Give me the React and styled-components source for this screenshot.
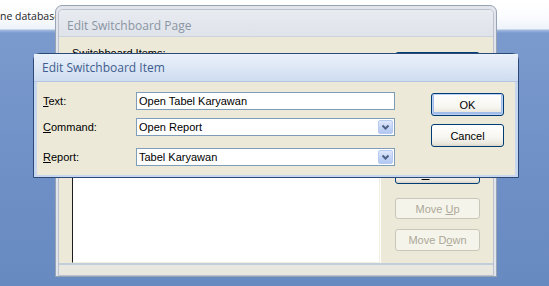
import React from 'react';
import styled, {createGlobalStyle} from 'styled-components';

const Global = createGlobalStyle`
  html, body { margin: 0; padding: 0; overflow: hidden; }
`

// - - DESKTOP - - //

const Desktop = styled.div`
  position: relative;
  width: 549px;
  height: 286px;
  overflow: hidden;
  display: flex;
  flex-direction: column;
  font-family: "Liberation Sans", Arial, sans-serif;
`

const TopStrip = styled.div`
  height: 30px;
  box-sizing: border-box;
  background: linear-gradient(#ffffff 0%, #fbfcfe 55%, #eef3fa 100%);
  border-bottom: 1px solid #c9d7ec;
  font-family: "Open Sans", sans-serif;
  font-size: 10.5px;
  color: #1e1e1e;
  padding: 9px 0 0 0;
  white-space: nowrap;
`

const Workspace = styled.div`
  flex: 1;
  background: linear-gradient(#a4bbdf 0px, #7b9ace 3px, #6d8fc5 60%, #678ac1 100%);
`

// - - WINDOWS - - //

const Window = styled.div`
  position: absolute;
  left: ${p => p.$x}px;
  top: ${p => p.$y}px;
  width: ${p => p.$w}px;
  height: ${p => p.$h}px;
  box-sizing: border-box;
  display: flex;
  flex-direction: column;
  border: 1px solid ${p => p.$active ? '#2b4a78' : '#98a3b2'};
  border-radius: 7px 7px 0 0;
  background: ${p => p.$active ? '#c7d7ef' : '#e2e6ec'};
  padding: ${p => p.$active ? '0' : '3px 2px 0'};
`

const Frame = styled.div`
  flex: 1;
  display: flex;
  flex-direction: column;
  border: 1px solid #b9c2ce;
  border-radius: 5px 5px 0 0;
  overflow: hidden;
`

const TitleBar = styled.div`
  height: ${p => p.$h}px;
  box-sizing: border-box;
  display: flex;
  align-items: center;
  padding: ${p => p.$pt || 0}px 0 0 ${p => p.$pl}px;
  font-family: "Open Sans", sans-serif;
  font-size: 12px;
  color: ${p => p.$active ? '#3e5d8e' : '#8a95a3'};
  background: ${p => p.$active
    ? 'linear-gradient(#eaf1fb 0%, #dde7f5 50%, #cfdcf0 100%)'
    : 'linear-gradient(#e8ebf0 0%, #dfe3ea 100%)'};
  border-bottom: 1px solid ${p => p.$active ? '#b3c6e4' : '#cdd3dc'};
`

const Body = styled.div`
  flex: 1;
  background: #ece9d8;
  margin: ${p => p.$m};
  display: flex;
  box-sizing: border-box;
  padding: ${p => p.$pad};
`

const BottomBand = styled.div`
  height: ${p => p.$h}px;
  border-top: 2px solid #c3cedc;
  background: #e9e8e0;
`

// - - CONTROLS - - //

const Column = styled.div`
  display: flex;
  flex-direction: column;
  width: ${p => p.$w ? p.$w + 'px' : 'auto'};
  margin-top: ${p => p.$mt || 0}px;
  margin-left: ${p => p.$ml || 0}px;
`

const Row = styled.div`
  display: flex;
  align-items: center;
  height: 18px;
  margin-top: ${p => p.$mt || 0}px;
`

const Label = styled.div`
  width: ${p => p.$w}px;
  font-size: 11px;
  color: #000;
`

const SmallLabel = styled.div`
  font-size: 11px;
  color: #000;
  height: 14px;
`

const Field = styled.div`
  position: relative;
  width: 259px;
  height: 18px;
  box-sizing: border-box;
  border: 1px solid #7f9db9;
  background: #fff;
  font-size: 11px;
  color: #000;
  padding-left: 2px;
  display: flex;
  align-items: center;
`

const DropButton = styled.div`
  position: absolute;
  right: 1px;
  top: 1px;
  width: 15px;
  height: 14px;
  box-sizing: border-box;
  border: 1px solid #b7cbf2;
  border-radius: 2px;
  background: linear-gradient(#dfe8fc 0%, #c6d6f7 50%, #b3c7f2 100%);
  display: flex;
  align-items: center;
  justify-content: center;
`

const Button = styled.div`
  width: ${p => p.$w}px;
  height: ${p => p.$h || 23}px;
  margin-top: ${p => p.$mt || 0}px;
  box-sizing: border-box;
  border: 1px solid ${p => p.$disabled ? '#c9c7ba' : '#003c74'};
  border-radius: 3px;
  background: ${p => p.$disabled
    ? '#f5f4ea'
    : 'linear-gradient(#ffffff 0%, #f7f6f1 60%, #e9e6dc 90%, #d7d2c6 100%)'};
  box-shadow: ${p => p.$default ? 'inset 0 0 0 1px #bcd0f3, inset 0 -1px 0 2px #a3bdea' : 'none'};
  display: flex;
  align-items: center;
  justify-content: center;
  font-size: 11px;
  color: ${p => p.$disabled ? '#aca899' : '#000'};
`

const ListBox = styled.div`
  flex: 1;
  margin-top: 2px;
  background: #fff;
  border-style: solid;
  border-width: 1px;
  border-color: #1c1c1c #f1efe2 #f1efe2 #1c1c1c;
  box-shadow: 1px 1px 0 #fff;
`

const Chevron = () => (
  <svg width="9" height="7" viewBox="0 0 9 7">
    <polyline points="1.5,1.5 4.5,4.5 7.5,1.5" fill="none" stroke="#4d6185" strokeWidth="2" />
  </svg>
)

export default function App() {
  return (
    <>
      <Global />
      <Desktop>
        <TopStrip>ne database</TopStrip>
        <Workspace />

        <Window $x={55} $y={5} $w={442} $h={272}>
          <Frame>
            <TitleBar $h={27} $pl={8} $pt={4}>Edit Switchboard Page</TitleBar>
            <Body $m="0" $pad="10px 12px 0 13px">
              <Column $w={308}>
                <SmallLabel><u>S</u>witchboard Items:</SmallLabel>
                <ListBox />
              </Column>
              <Column $w={85} $ml={15} $mt={5}>
                <Button $w={85} $default><span>Close</span></Button>
                <Button $w={85} $h={21} $mt={88}><span><u>D</u>elete</span></Button>
                <Button $w={85} $h={21} $mt={14} $disabled><span>Move <u>U</u>p</span></Button>
                <Button $w={85} $h={22} $mt={10} $disabled><span>Move D<u>o</u>wn</span></Button>
              </Column>
            </Body>
            <BottomBand $h={10} />
          </Frame>
        </Window>

        <Window $x={33} $y={53} $w={486} $h={125} $active>
          <TitleBar $h={28} $pl={8} $active>Edit Switchboard Item</TitleBar>
          <Body $m="0 3px 2px" $pad="10px 10px 0 6px">
            <Column>
              <Row>
                <Label $w={93}><u>T</u>ext:</Label>
                <Field>Open Tabel Karyawan</Field>
              </Row>
              <Row $mt={8}>
                <Label $w={93}><u>C</u>ommand:</Label>
                <Field>Open Report<DropButton><Chevron /></DropButton></Field>
              </Row>
              <Row $mt={12}>
                <Label $w={93}><u>R</u>eport:</Label>
                <Field>Tabel Karyawan<DropButton><Chevron /></DropButton></Field>
              </Row>
            </Column>
            <Column $ml={36} $mt={1}>
              <Button $w={73} $default><span>OK</span></Button>
              <Button $w={73} $mt={8}><span>Cancel</span></Button>
            </Column>
          </Body>
        </Window>
      </Desktop>
    </>
  )
}
